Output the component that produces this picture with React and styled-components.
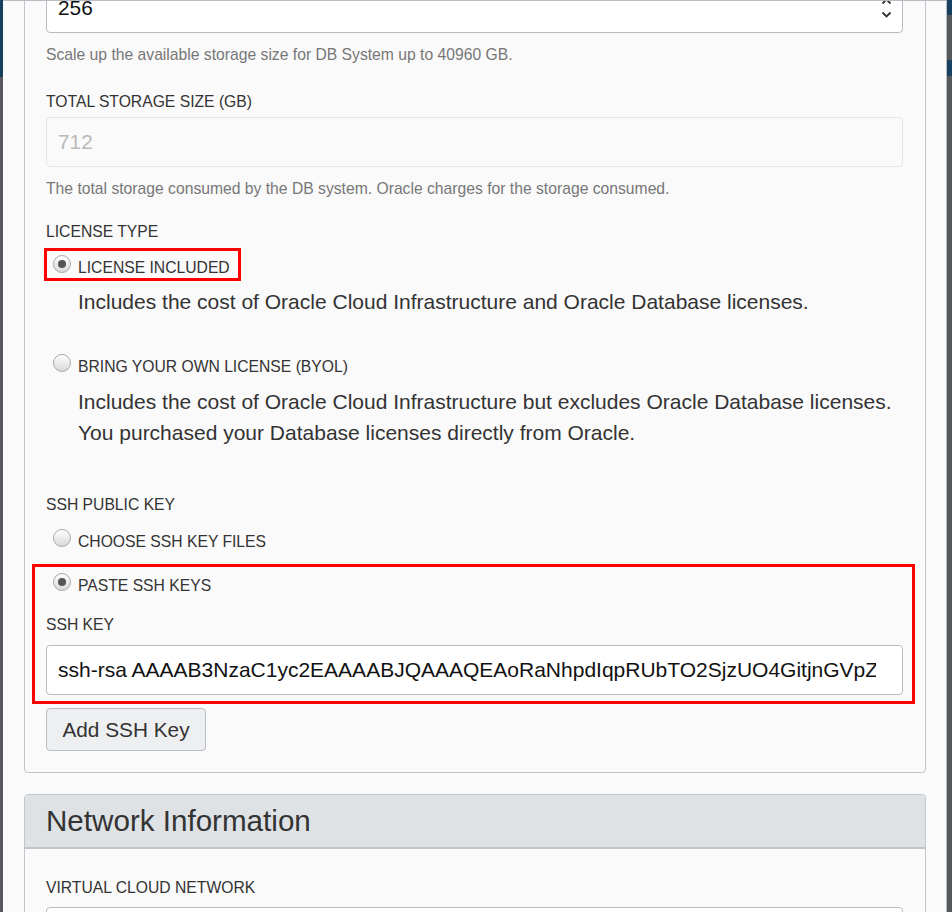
import React from "react";
import styled, { createGlobalStyle } from "styled-components";

const Global = createGlobalStyle`
  html, body { margin: 0; padding: 0; }
  body {
    font-family: "Liberation Sans", Arial, sans-serif;
    background: #55585c;
    overflow: hidden;
  }
`;

const Screen = styled.div`
  display: flex;
  width: 952px;
  height: 912px;
  overflow: hidden;
`;

// strips of the page behind the dialog
const Backdrop = styled.div`
  flex: 0 0 ${(p) => p.$w}px;
  display: flex;
  flex-direction: column;
  background: #55585c;
`;

const BackdropBand = styled.div`
  height: ${(p) => p.$h}px;
  margin-top: ${(p) => p.$top || 0}px;
  background: ${(p) => p.$color};
`;

const Panel = styled.div`
  flex: 1;
  background: #fafafa;
  border-top: 1px solid #b9bcc2;
  border-right: 1px solid #b9bcc2;
  overflow: hidden;
  display: flex;
  flex-direction: column;
  padding: 0 20px 0 21px;
`;

const Card = styled.section`
  border: 1px solid #c0c4cb;
  border-radius: 4px;
  background: #fafafa;
  margin-top: ${(p) => p.$top || 0}px;
  flex-shrink: 0;
`;

const CardHeader = styled.div`
  background: #dfe2e5;
  border-bottom: 2px solid #c0c4cb;
  border-radius: 4px 4px 0 0;
  height: 52px;
  display: flex;
  align-items: center;
  padding: 0 21px;
  font-size: 29.6px;
  color: #333;
`;

const CardBody = styled.div`
  padding: ${(p) => p.$pad || "0 22px 21px 21px"};
  display: flex;
  flex-direction: column;
  align-items: flex-start;
`;

const Input = styled.div`
  align-self: stretch;
  height: 48px;
  border: 1px solid ${(p) => (p.$disabled ? "#e3e6ea" : "#b8bcc4")};
  border-radius: 4px;
  background: ${(p) => (p.$disabled ? "#fafafa" : "#fff")};
  color: ${(p) => (p.$disabled ? "#b9b9b9" : "#111")};
  display: flex;
  align-items: center;
  gap: 4px;
  padding: 0 ${(p) => p.$right || 26}px 0 11px;
  margin-top: ${(p) => p.$top || 0}px;
  font-size: ${(p) => p.$size || 20.8}px;
  white-space: nowrap;
  overflow: hidden;
`;

const InputText = styled.span`
  flex: 1;
  overflow: hidden;
  white-space: nowrap;
`;

const Spinner = styled.span`
  display: flex;
  flex-direction: column;
  gap: 6px;
  margin-top: -1px;
`;

const Help = styled.div`
  font-size: 15.7px;
  line-height: 20px;
  color: #777;
  margin-top: ${(p) => p.$top}px;
`;

const Label = styled.div`
  font-size: 15.7px;
  line-height: 20px;
  color: #333;
  text-transform: uppercase;
  margin-top: ${(p) => p.$top}px;
`;

const Highlight = styled.div`
  border: 3px solid #f00;
  margin: ${(p) => p.$margin};
  padding: ${(p) => p.$pad};
  align-self: ${(p) => (p.$wide ? "stretch" : "flex-start")};
  display: flex;
  flex-direction: column;
  align-items: stretch;
`;

const RadioRow = styled.label`
  display: flex;
  align-items: flex-start;
  gap: 7px;
  margin: ${(p) => p.$margin || 0};
  padding-left: ${(p) => p.$indent ?? 7}px;
  font-size: 15.7px;
  line-height: 18px;
  color: #333;
`;

const RadioText = styled.span`
  margin-top: 4px;
`;

const RadioDot = styled.span`
  width: 16px;
  height: 16px;
  border-radius: 50%;
  border: 1px solid #a9a9a9;
  background: linear-gradient(#ffffff, #d9d9d9);
  display: flex;
  align-items: center;
  justify-content: center;
  flex-shrink: 0;
  &::after {
    content: "";
    width: 8px;
    height: 8px;
    border-radius: 50%;
    background: ${(p) => (p.$checked ? "#555" : "transparent")};
  }
`;

const Description = styled.div`
  font-size: 21px;
  line-height: 31px;
  color: #333;
  padding-left: 32px;
  margin-top: ${(p) => p.$top}px;
`;

const Button = styled.button`
  margin-top: 4px;
  height: 43px;
  width: 160px;
  padding: 0;
  font-family: inherit;
  font-size: 20.8px;
  color: #333;
  background: #eeeff1;
  border: 1px solid #b8bcc4;
  border-radius: 4px;
`;

function Radio({ checked, children, margin, indent }) {
  return (
    <RadioRow $margin={margin} $indent={indent}>
      <RadioDot $checked={checked} />
      <RadioText>{children}</RadioText>
    </RadioRow>
  );
}

function Chevron({ up }) {
  return (
    <svg width="11" height="7" viewBox="0 0 11 7">
      <path
        d={up ? "M1.5 5.5 L5.5 1.5 L9.5 5.5" : "M1.5 1.5 L5.5 5.5 L9.5 1.5"}
        fill="none"
        stroke="#333"
        strokeWidth="1.8"
      />
    </svg>
  );
}

export default function App() {
  return (
    <Screen>
      <Global />
      <Backdrop $w={3}>
        <BackdropBand $h={77} $color="#17405f" />
      </Backdrop>
      <Panel>
        <Card $top={-19}>
          <CardBody>
            <Input $right={10}>
              <InputText>256</InputText>
              <Spinner>
                <Chevron up />
                <Chevron />
              </Spinner>
            </Input>
            <Help $top={12}>Scale up the available storage size for DB System up to 40960 GB.</Help>
            <Label $top={27}>Total Storage Size (GB)</Label>
            <Input $disabled $top={5}>712</Input>
            <Help $top={12}>
              The total storage consumed by the DB system. Oracle charges for the storage consumed.
            </Help>
            <Label $top={23}>License Type</Label>
            <Highlight $margin="6px 0 0 -2px" $pad="4px 8px 1px 0">
              <Radio checked indent={6}>LICENSE INCLUDED</Radio>
            </Highlight>
            <Description $top={4.5}>
              Includes the cost of Oracle Cloud Infrastructure and Oracle Database licenses.
            </Description>
            <Radio margin="37.5px 0 0 0">BRING YOUR OWN LICENSE (BYOL)</Radio>
            <Description $top={9.5}>
              Includes the cost of Oracle Cloud Infrastructure but excludes Oracle Database licenses.
              <br />
              You purchased your Database licenses directly from Oracle.
            </Description>
            <Label $top={47.5}>SSH Public Key</Label>
            <Radio margin="14px 0 0 0">CHOOSE SSH KEY FILES</Radio>
            <Highlight $wide $margin="13px -12px 0 -14px" $pad="6px 9px 6px 11px">
              <Radio checked>PASTE SSH KEYS</Radio>
              <Label $top={20}>SSH Key</Label>
              <Input $top={10} $size={21} $right={26}>
                <InputText>ssh-rsa AAAAB3NzaC1yc2EAAAABJQAAAQEAoRaNhpdIqpRUbTO2SjzUO4GitjnGVpZ</InputText>
              </Input>
            </Highlight>
            <Button>Add SSH Key</Button>
          </CardBody>
        </Card>
        <Card $top={21}>
          <CardHeader>Network Information</CardHeader>
          <CardBody $pad="0 22px 0 21px">
            <Label $top={29}>Virtual Cloud Network</Label>
            <Input $top={9} />
          </CardBody>
        </Card>
      </Panel>
      <Backdrop $w={5}>
        <BackdropBand $h={15} $color="#17405f" />
        <BackdropBand $h={16} $top={45} $color="#17405f" />
      </Backdrop>
    </Screen>
  );
}
